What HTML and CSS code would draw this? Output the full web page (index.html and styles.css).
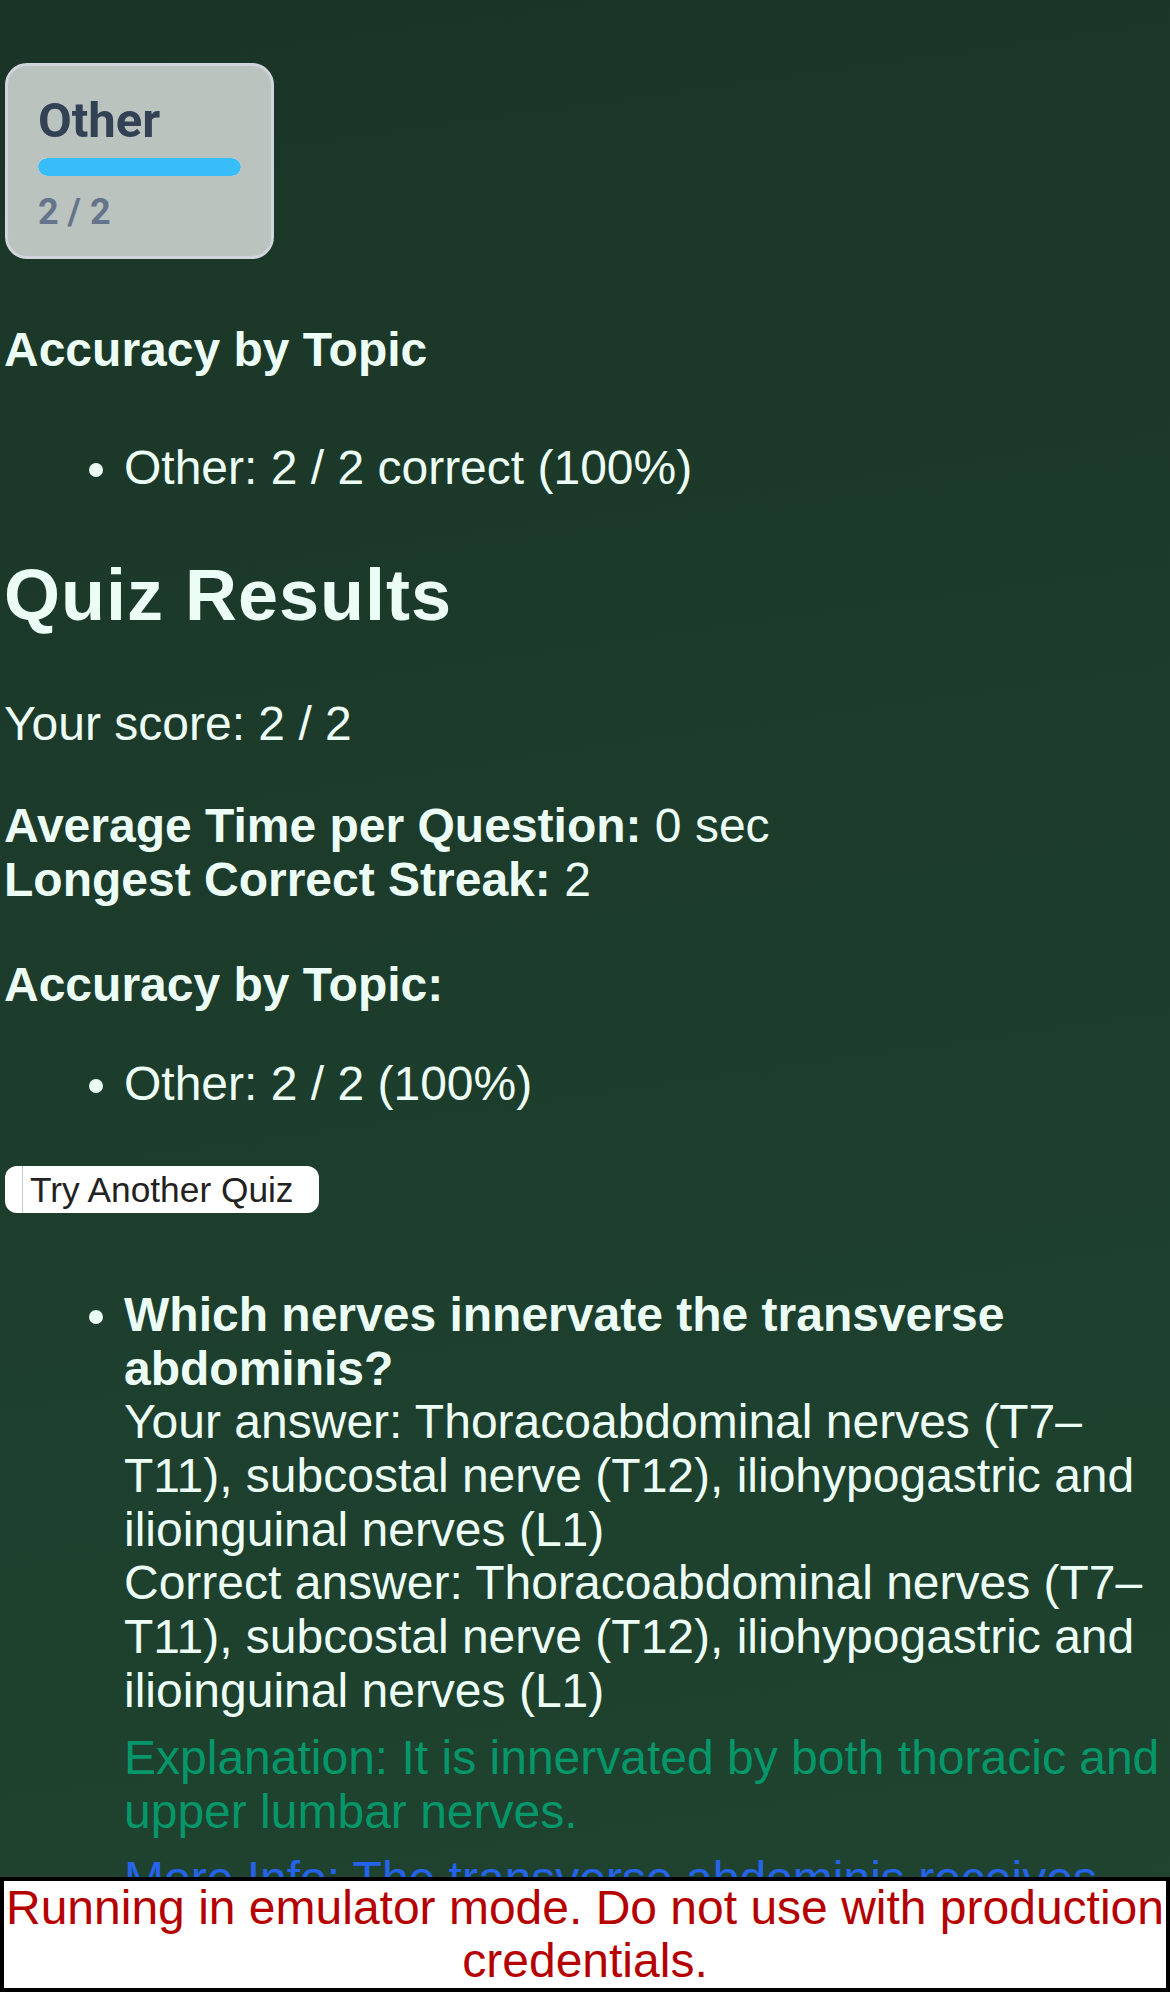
FILE: index.html
```html
<!DOCTYPE html>
<html lang="en">
<head>
<meta charset="utf-8">
<title>Quiz Results</title>
<link rel="stylesheet" href="styles.css">
</head>
<body>
<main class="page">
  <section class="topic-grid">
    <div class="topic-card">
      <div class="topic-name">Other</div>
      <div class="topic-track"><div class="topic-fill" style="width:100%"></div></div>
      <div class="topic-count">2 / 2</div>
    </div>
  </section>

  <h4 class="section-title">Accuracy by Topic</h4>
  <ul class="topic-list first">
    <li>Other: 2 / 2 correct (100%)</li>
  </ul>

  <h2 class="results-title">Quiz Results</h2>
  <p class="score">Your score: 2 / 2</p>
  <p class="stats"><strong>Average Time per Question:</strong> 0 sec<br><strong>Longest Correct Streak:</strong> 2</p>

  <h4 class="topic-heading">Accuracy by Topic:</h4>
  <ul class="topic-list second">
    <li>Other: 2 / 2 (100%)</li>
  </ul>

  <div class="actions"><button class="retry" type="button">Try Another Quiz</button></div>

  <ul class="questions">
    <li>
      <strong>Which nerves innervate the transverse abdominis?</strong><br>
      Your answer: Thoracoabdominal nerves (T7–T11), subcostal nerve (T12), iliohypogastric and ilioinguinal nerves (L1)<br>
      Correct answer: Thoracoabdominal nerves (T7–T11), subcostal nerve (T12), iliohypogastric and ilioinguinal nerves (L1)
      <p class="explanation">Explanation: It is innervated by both thoracic and upper lumbar nerves.</p>
      <p class="more-info">More Info: The transverse abdominis receives segmental innervation from T7–L1.</p>
    </li>
  </ul>
</main>

<p class="emulator-warning">Running in emulator mode. Do not use with production credentials.</p>
</body>
</html>
```

FILE: styles.css
```css
html {
  min-height: 100%;
  background: linear-gradient(172deg, #1a3527 0%, #1d3d2c 50%, #1f4430 100%);
}

body {
  margin: 0;
  color: #ecfdf5;
  font-family: "Liberation Sans", Arial, Helvetica, sans-serif;
  font-size: 48px;
  line-height: 53.7px;
}

.page {
  padding: 63px 4px 0;
}

/* topic progress cards */
.topic-grid {
  display: flex;
  gap: 24px;
}

.topic-card {
  box-sizing: border-box;
  width: 269px;
  margin-left: 1px;
  padding: 27px 30px 23px;
  border: 3px solid #d2d4dc;
  border-radius: 22px;
  background: rgba(255, 255, 255, 0.7);
  font-family: Roboto, "Liberation Sans", sans-serif;
}

.topic-name {
  font-size: 49px;
  line-height: 56px;
  font-weight: 700;
  color: #334155;
}

.topic-track {
  margin-top: 9px;
  height: 18px;
  border-radius: 9px;
  background: #e5e7eb;
  overflow: hidden;
}

.topic-fill {
  height: 100%;
  border-radius: 9px;
  background: #38bdf8;
}

.topic-count {
  margin-top: 15px;
  font-size: 36px;
  line-height: 42px;
  font-weight: 700;
  color: #64748b;
}

/* headings and text */
.section-title {
  margin: 64px 0;
  font-size: 48px;
  font-weight: 700;
}

.topic-list {
  padding-left: 120px;
}

.topic-list.first {
  margin: 48px 0;
}

.results-title {
  margin: 60px 0;
  font-size: 72px;
  line-height: 83px;
  font-weight: 700;
  letter-spacing: 1px;
}

.score {
  margin: 60px 0 48px;
}

.stats {
  margin: 48px 0;
}

.topic-heading {
  margin: 51px 0 46px;
  font-size: 48px;
  font-weight: 700;
}

.topic-list.second {
  margin: 46px 0 48px;
}

/* button */
.actions {
  margin: 0;
}

.retry {
  -webkit-appearance: none;
  appearance: none;
  margin: 0 0 0 1px;
  padding: 4px 25px 3px;
  border: 0;
  border-radius: 12px;
  background: linear-gradient(to right, #ffffff 0 17px, #c6cdcd 17px 18px, #ffffff 18px);
  color: #222222;
  font-family: "Liberation Sans", Arial, Helvetica, sans-serif;
  font-size: 35.3px;
  line-height: 40px;
  vertical-align: baseline;
}

/* question review */
.questions {
  margin: 75px 0 0;
  padding-left: 120px;
}

.explanation {
  margin: 13.5px 0;
  color: #059669;
}

.more-info {
  margin: 13.5px 0;
  color: #2563eb;
}

/* emulator banner */
.emulator-warning {
  position: fixed;
  left: 0;
  bottom: 0;
  z-index: 10000;
  box-sizing: border-box;
  width: 100%;
  margin: 0;
  border: 4.8px solid #000000;
  background: #ffffff;
  color: #b50000;
  text-align: center;
  font-size: 48px;
  line-height: 53.7px;
}
```
